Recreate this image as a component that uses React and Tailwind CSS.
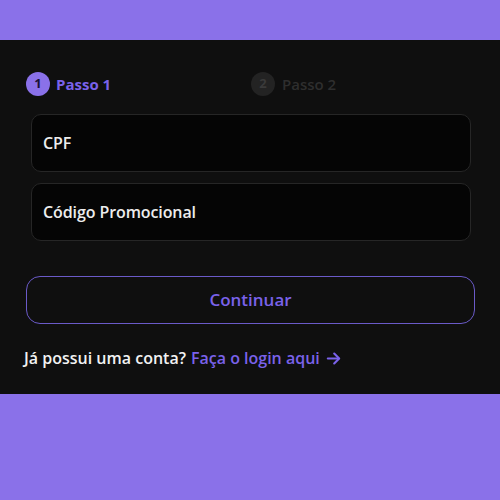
import React from "react";

export default function App() {
  return (
    <div className="w-[500px] h-[500px] bg-[#8a71e9] flex flex-col" style={{ fontFamily: "'Open Sans', 'Noto Sans', sans-serif" }}>
      <div className="h-[40px]" />
      <div className="h-[354px] bg-[#0f0f0f] flex flex-col pl-[26px] pr-[25px]">
        <div className="flex items-center mt-[32px] h-[24px]">
          <div className="flex items-center w-[225px]">
            <div className="w-[24px] h-[24px] rounded-full bg-[#8a71e9] flex items-center justify-center text-[13px] font-bold text-[#1a1238]">1</div>
            <span className="ml-[6px] text-[15px] font-bold text-[#7a62ea]">Passo 1</span>
          </div>
          <div className="flex items-center">
            <div className="w-[24px] h-[24px] rounded-full bg-[#232323] flex items-center justify-center text-[13px] font-bold text-[#3a3a3a]">2</div>
            <span className="ml-[7px] text-[15px] font-semibold text-[#2e2e2e]">Passo 2</span>
          </div>
        </div>
        <div className="mt-[18px] ml-[5px] mr-[4px] flex flex-col gap-[11px]">
          <div className="h-[58px] rounded-[10px] border border-[#262626] bg-[#050505] flex items-center px-[11px] text-[16px] font-semibold text-[#ededed] tracking-[-0.1px]">CPF</div>
          <div className="h-[58px] rounded-[10px] border border-[#262626] bg-[#050505] flex items-center px-[11px] text-[16px] font-semibold text-[#ededed] tracking-[-0.1px]">Código Promocional</div>
        </div>
        <div className="mt-[35px] h-[48px] rounded-[14px] border-[1.5px] border-[#6a5ac8] flex items-center justify-center text-[17px] font-semibold text-[#7a62ea]">Continuar</div>
        <div className="mt-[22px] flex items-center text-[16px] font-semibold text-[#f2f2f2] ml-[-2px]">
          <span>Já possui uma conta?</span>
          <span className="ml-[5px] text-[#7a62ea]">Faça o login aqui</span>
          <svg className="ml-[5px]" width="17" height="17" viewBox="0 0 24 24" fill="none" stroke="#7a62ea" strokeWidth="3" strokeLinecap="round" strokeLinejoin="round">
            <path d="M4 12h15" />
            <path d="M13 5l7 7-7 7" />
          </svg>
        </div>
      </div>
    </div>
  );
}
